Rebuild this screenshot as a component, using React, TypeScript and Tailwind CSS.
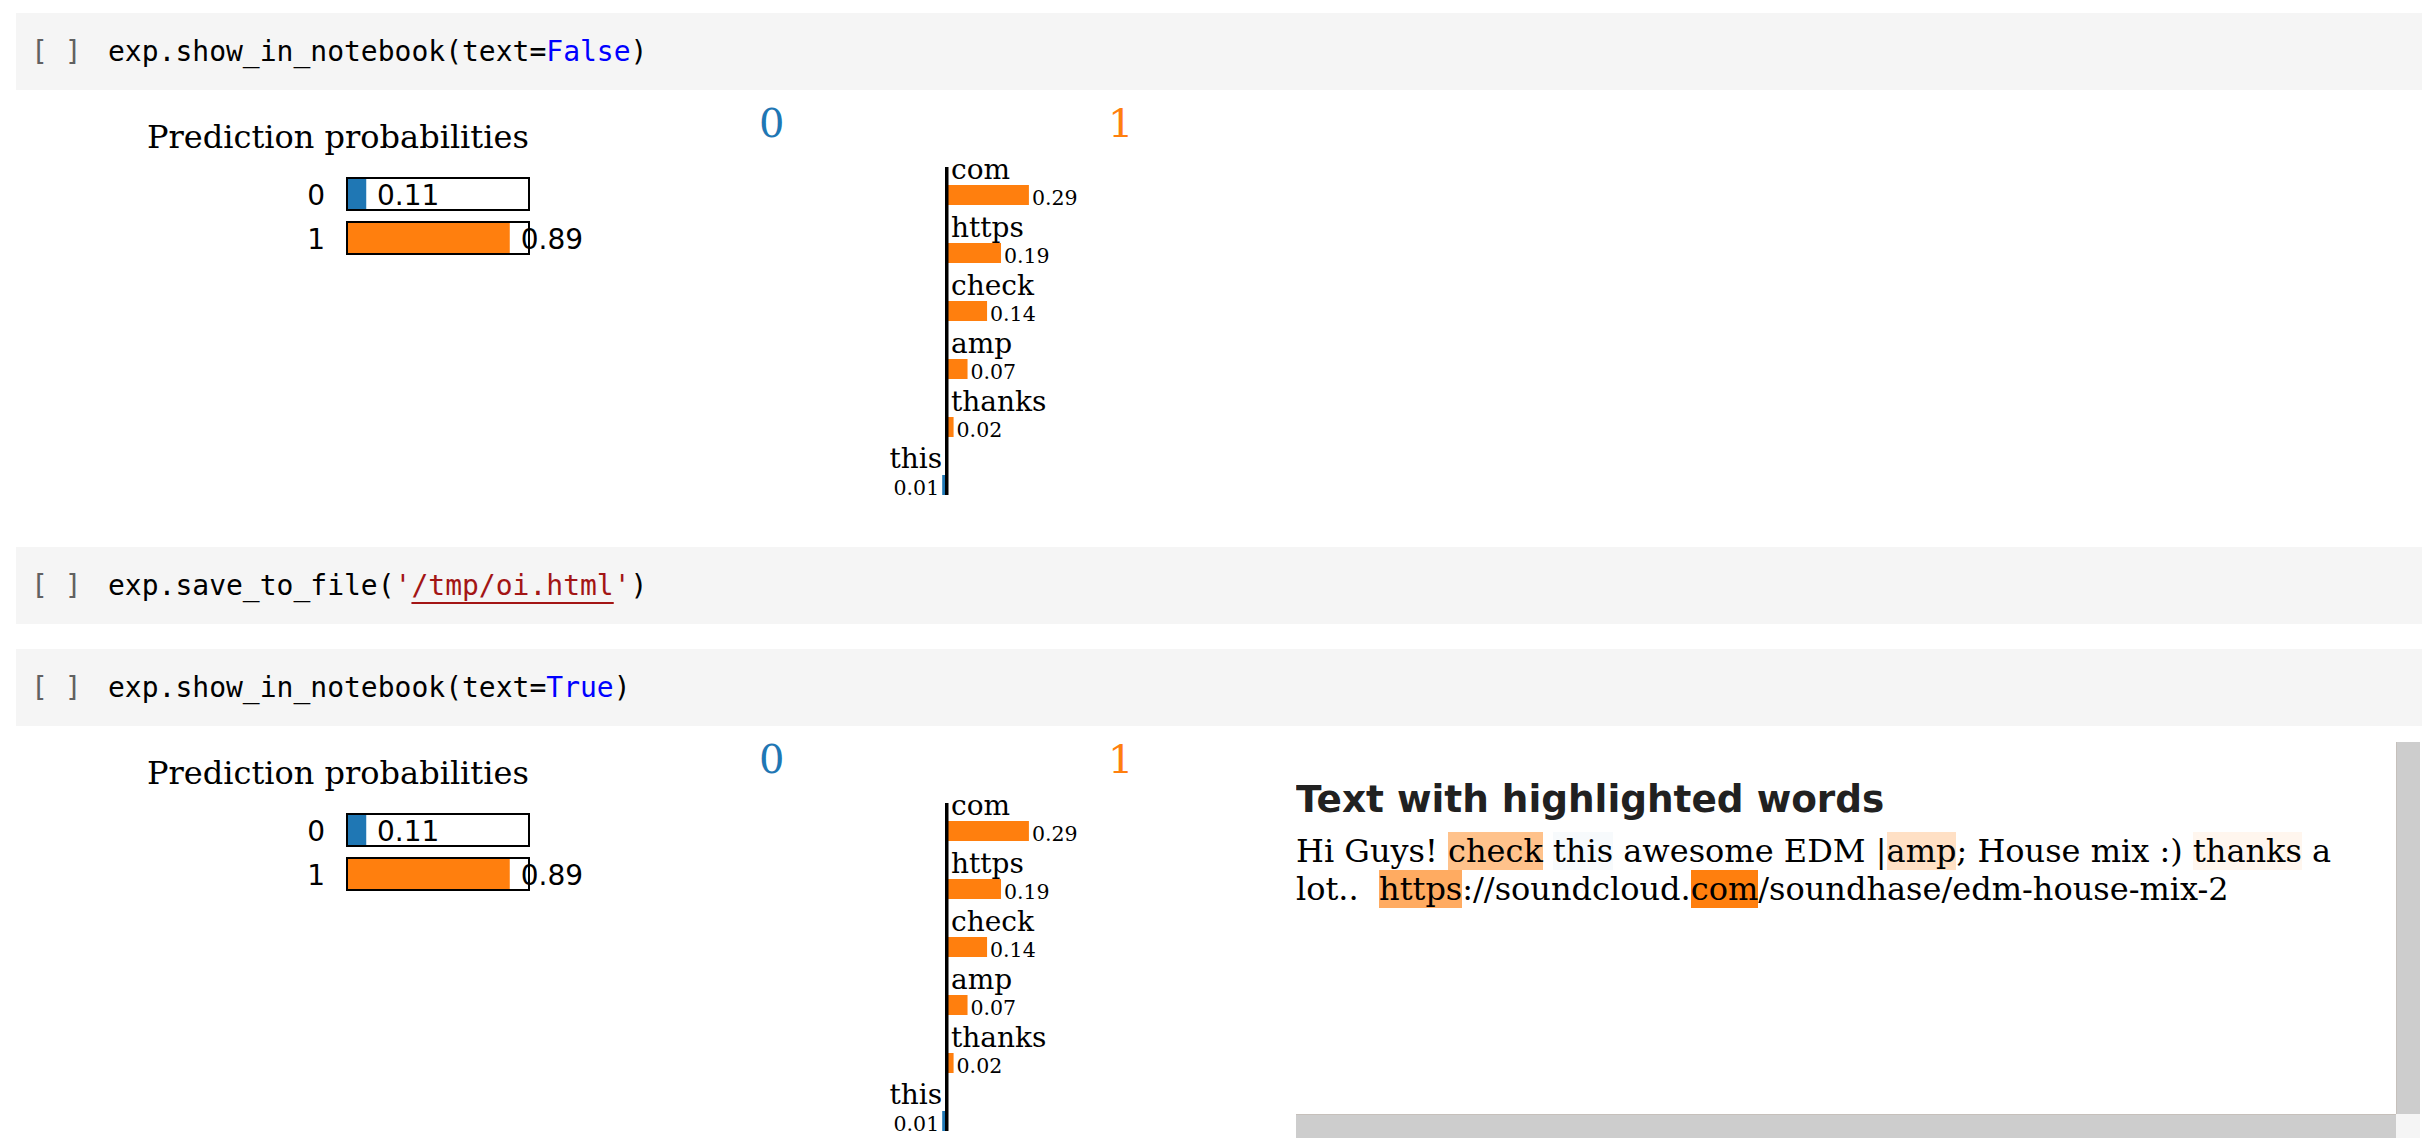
import React from "react";

const BLUE = "#1f77b4";
const ORANGE = "#ff7f0e";

const probs = [
  { label: "0", value: 0.11, color: BLUE },
  { label: "1", value: 0.89, color: ORANGE },
];

const features = [
  { word: "com", value: 0.29 },
  { word: "https", value: 0.19 },
  { word: "check", value: 0.14 },
  { word: "amp", value: 0.07 },
  { word: "thanks", value: 0.02 },
  { word: "this", value: -0.01 },
];

function CodeCell({ children }: { children: React.ReactNode }) {
  return (
    <div className="ml-[16px] mr-[6px] h-[77px] bg-[#f5f5f5] flex items-center font-['DejaVu_Sans_Mono',monospace] text-[28px] text-black">
      <span className="ml-[15px] w-[77px] text-[#616161] whitespace-pre">[ ]</span>
      <span className="whitespace-pre">{children}</span>
    </div>
  );
}

function ProbaChart() {
  return (
    <svg width="700" height="457" className="shrink-0">
      <text x="131" y="58" fontFamily="DejaVu Serif" fontSize="32" fill="black">
        Prediction probabilities
      </text>
      {probs.map((p, i) => {
        const y = 88 + i * 44;
        const valX = p.value * 184 > 60 ? 330 + p.value * 184 + 11 : 361;
        return (
          <g key={p.label}>
            <text x="309" y={y + 27} textAnchor="end" fontFamily="DejaVu Sans" fontSize="28">
              {p.label}
            </text>
            <rect x="330" y={y} width={p.value * 184} height="32" fill={p.color} />
            <rect x="331" y={y} width="182" height="32" fill="none" stroke="black" strokeWidth="2" />
            <text x={valX} y={y + 27} fontFamily="DejaVu Sans" fontSize="28">
              {p.value.toFixed(2)}
            </text>
          </g>
        );
      })}
    </svg>
  );
}

function ExplanationChart() {
  const axis = 230;
  const scale = 279;
  return (
    <svg width="580" height="457" className="shrink-0">
      <text x="43" y="47" fontFamily="DejaVu Serif" fontSize="40" fill={BLUE}>0</text>
      <text x="392" y="47" fontFamily="DejaVu Serif" fontSize="40" fill={ORANGE}>1</text>
      {features.map((f, i) => {
        const y = 95 + i * 58;
        const w = Math.max(Math.abs(f.value) * scale, 2.5);
        if (f.value > 0) {
          return (
            <g key={f.word}>
              <text x={axis + 5} y={y - 6} fontFamily="DejaVu Serif" fontSize="28">{f.word}</text>
              <rect x={axis + 2} y={y} width={w} height="20" fill={ORANGE} />
              <text x={axis + 2 + w + 3} y={y + 20} fontFamily="DejaVu Serif" fontSize="20.5">
                {f.value.toFixed(2)}
              </text>
            </g>
          );
        }
        return (
          <g key={f.word}>
            <text x={axis - 4} y={y - 7} textAnchor="end" fontFamily="DejaVu Serif" fontSize="28">{f.word}</text>
            <rect x={axis - 1 - w} y={y} width={w} height="20" fill={BLUE} />
            <text x={axis - 1 - w - 3} y={y + 20} textAnchor="end" fontFamily="DejaVu Serif" fontSize="20.5">
              {Math.abs(f.value).toFixed(2)}
            </text>
          </g>
        );
      })}
      <rect x={axis - 1} y="77" width="3.5" height="328" fill="black" />
    </svg>
  );
}

function TextPanel() {
  return (
    <div className="mt-[16px] w-[1124px] h-[396px] flex flex-col shrink-0">
      <div className="flex flex-1 min-h-0">
        <div className="flex-1 overflow-hidden">
          <h3 className="mt-[36px] font-['DejaVu_Sans',sans-serif] font-bold text-[37.4px] leading-[43px] text-[#212121]">
            Text with highlighted words
          </h3>
          <p className="mt-[11px] font-['DejaVu_Serif',serif] text-[32px] leading-[38px] text-black">
            Hi Guys! <span className="bg-[#ffc28b]">check</span>{" "}
            <span className="bg-[#f7fafc]">this</span> awesome EDM |
            <span className="bg-[#ffe0c5]">amp</span>; House mix :){" "}
            <span className="bg-[#fff6ee]">thanks</span> a
            <br />
            lot..&nbsp; <span className="bg-[#ffab61]">https</span>://soundcloud.
            <span className="bg-[#ff7f0e]">com</span>/soundhase/edm-house-mix-2
          </p>
        </div>
        <div className="w-[24px] bg-[#cdcdcd] border-l border-[#c6c0bb]" />
      </div>
      <div className="flex h-[24px]">
        <div className="flex-1 bg-[#cdcdcd] border-t border-[#c6c0bb]" />
        <div className="w-[24px] bg-[#f5f5f5]" />
      </div>
    </div>
  );
}

function Output({ withText }: { withText: boolean }) {
  return (
    <div className="ml-[16px] flex h-[457px] overflow-visible">
      <ProbaChart />
      <ExplanationChart />
      {withText && <TextPanel />}
    </div>
  );
}

export default function App() {
  return (
    <div className="w-[2428px] h-[1148px] bg-white overflow-hidden pt-[13px]">
      <CodeCell>
        exp.show_in_notebook(text=<span className="text-[#0000ff]">False</span>)
      </CodeCell>
      <Output withText={false} />
      <CodeCell>
        exp.save_to_file(
        <span className="text-[#a31515]">
          '<span className="underline decoration-[#a31515] decoration-2 underline-offset-[7px]">/tmp/oi.html</span>'
        </span>
        )
      </CodeCell>
      <div className="h-[25px]" />
      <CodeCell>
        exp.show_in_notebook(text=<span className="text-[#0000ff]">True</span>)
      </CodeCell>
      <Output withText={true} />
    </div>
  );
}
